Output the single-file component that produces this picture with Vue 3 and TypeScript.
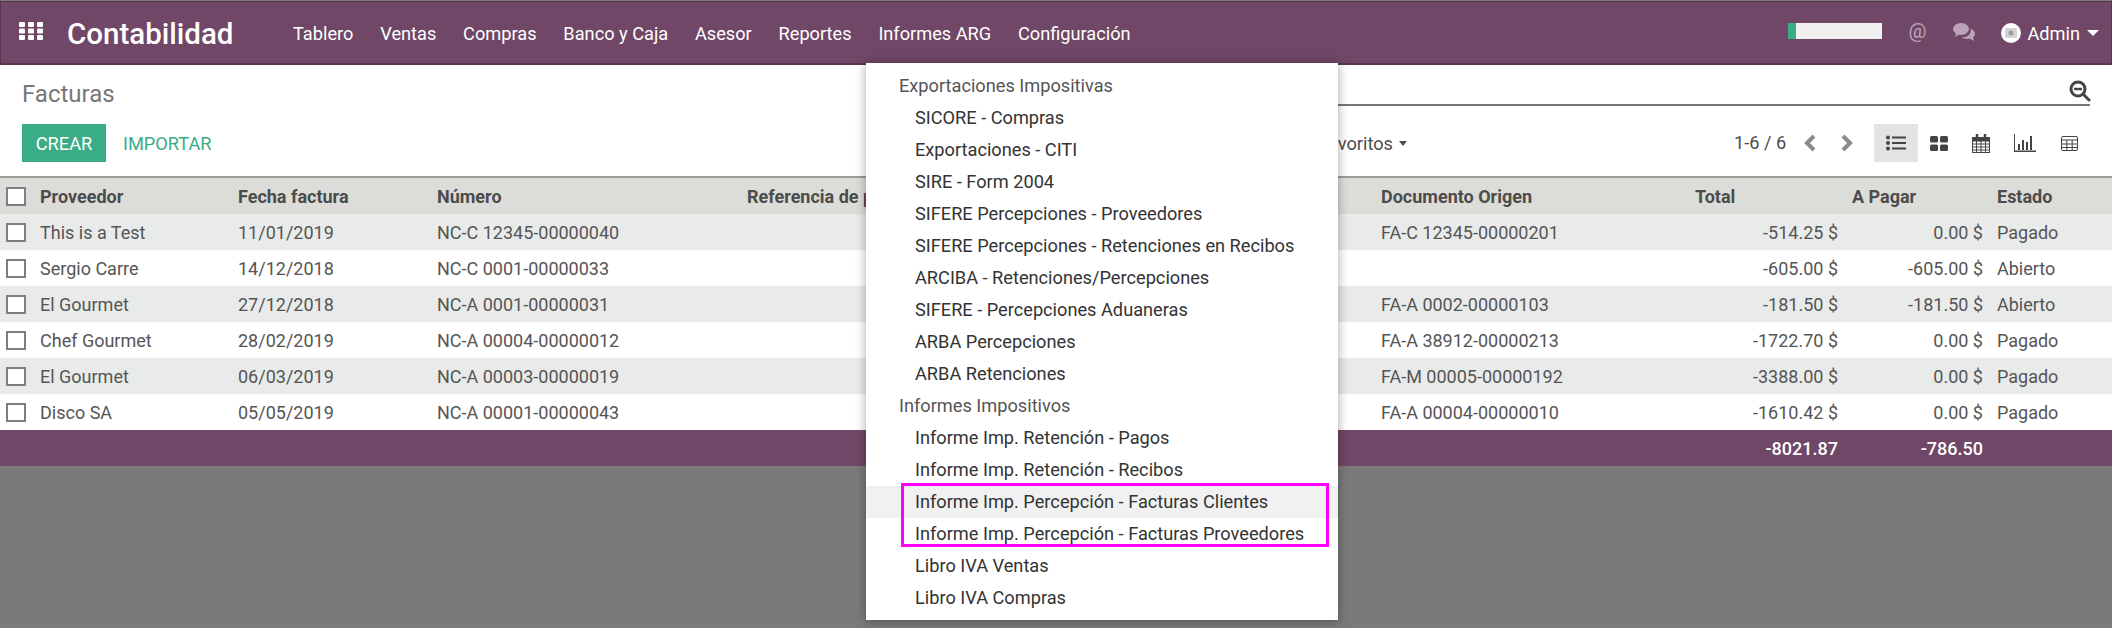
<script setup lang="ts">
interface Row { p: string; f: string; n: string; d: string; t: string; a: string; e: string }
const nav: string[] = ['Tablero', 'Ventas', 'Compras', 'Banco y Caja', 'Asesor', 'Reportes', 'Informes ARG', 'Configuración']
const rows: Row[] = [
  { p: 'This is a Test', f: '11/01/2019', n: 'NC-C 12345-00000040', d: 'FA-C 12345-00000201', t: '-514.25 $', a: '0.00 $', e: 'Pagado' },
  { p: 'Sergio Carre', f: '14/12/2018', n: 'NC-C 0001-00000033', d: '', t: '-605.00 $', a: '-605.00 $', e: 'Abierto' },
  { p: 'El Gourmet', f: '27/12/2018', n: 'NC-A 0001-00000031', d: 'FA-A 0002-00000103', t: '-181.50 $', a: '-181.50 $', e: 'Abierto' },
  { p: 'Chef Gourmet', f: '28/02/2019', n: 'NC-A 00004-00000012', d: 'FA-A 38912-00000213', t: '-1722.70 $', a: '0.00 $', e: 'Pagado' },
  { p: 'El Gourmet', f: '06/03/2019', n: 'NC-A 00003-00000019', d: 'FA-M 00005-00000192', t: '-3388.00 $', a: '0.00 $', e: 'Pagado' },
  { p: 'Disco SA', f: '05/05/2019', n: 'NC-A 00001-00000043', d: 'FA-A 00004-00000010', t: '-1610.42 $', a: '0.00 $', e: 'Pagado' }
]
const menuA: string[] = ['SICORE - Compras', 'Exportaciones - CITI', 'SIRE - Form 2004', 'SIFERE Percepciones - Proveedores', 'SIFERE Percepciones - Retenciones en Recibos', 'ARCIBA - Retenciones/Percepciones', 'SIFERE - Percepciones Aduaneras', 'ARBA Percepciones', 'ARBA Retenciones']
const menuB: string[] = ['Informe Imp. Retención - Pagos', 'Informe Imp. Retención - Recibos', 'Informe Imp. Percepción - Facturas Clientes', 'Informe Imp. Percepción - Facturas Proveedores', 'Libro IVA Ventas', 'Libro IVA Compras']
</script>

<template>
  <div class="page">
    <header class="navbar">
      <svg class="apps" width="24" height="18" viewBox="0 0 24 18" fill="#fff">
        <rect x="0" y="0" width="6" height="5" rx="1" /><rect x="9" y="0" width="6" height="5" rx="1" /><rect x="18" y="0" width="6" height="5" rx="1" />
        <rect x="0" y="6.5" width="6" height="5" rx="1" /><rect x="9" y="6.5" width="6" height="5" rx="1" /><rect x="18" y="6.5" width="6" height="5" rx="1" />
        <rect x="0" y="13" width="6" height="5" rx="1" /><rect x="9" y="13" width="6" height="5" rx="1" /><rect x="18" y="13" width="6" height="5" rx="1" />
      </svg>
      <span class="brand">Contabilidad</span>
      <nav class="menu"><a v-for="n in nav" :key="n">{{ n }}</a></nav>
      <div class="systray">
        <div class="progress"><i></i></div>
        <span class="at">@</span>
        <svg class="chat" width="22" height="20" viewBox="0 0 22 20" fill="#bda3b7">
          <ellipse cx="8" cy="7" rx="8" ry="6" />
          <path d="M3 11l-1 4 5-3z" />
          <path d="M17.5 6.5c2.6 1 4.5 3 4.5 5.2 0 1.5-.8 2.8-2 3.8l1 3.5-4.4-2.5c-1 .3-2 .4-3 .4-2 0-3.700-.6-5-1.600 5.500.2 10.500-3.100 8.900-9.300z" />
        </svg>
        <span class="avatar">
          <svg width="12" height="10" viewBox="0 0 12 10"><rect width="12" height="10" rx="1" fill="#d6d3d5" /><circle cx="6" cy="5" r="2.500" fill="#a09ca0" /></svg>
        </span>
        <span class="admin">Admin</span>
        <span class="caret"></span>
      </div>
    </header>

    <section class="panel">
      <div class="panel-top">
        <h1>Facturas</h1>
        <div class="search">
          <svg width="22" height="22" viewBox="0 0 22 22" fill="none" stroke="#444" stroke-width="3">
            <circle cx="9" cy="9" r="7" /><path d="M14 14l6 6" stroke-linecap="round" /><path d="M5 9h8" stroke-width="2.500" />
          </svg>
        </div>
      </div>
      <div class="panel-bottom">
        <button class="crear">CREAR</button>
        <button class="importar">IMPORTAR</button>
        <div class="filters"><span>Filtros</span><span>Agrupar por</span><span>Favoritos</span><i class="mini-caret"></i></div>
        <span class="pager">1-6 / 6</span>
        <svg class="chev" width="14" height="20" viewBox="0 0 14 20" fill="none" stroke="#8a8a8a" stroke-width="4"><path d="M11 3l-7 7 7 7" /></svg>
        <svg class="chev chev2" width="14" height="20" viewBox="0 0 14 20" fill="none" stroke="#8a8a8a" stroke-width="4"><path d="M3 3l7 7-7 7" /></svg>
        <div class="views">
          <span class="view on">
            <svg width="20" height="16" viewBox="0 0 20 16" fill="#444"><circle cx="2" cy="2.500" r="2" /><circle cx="2" cy="8" r="2" /><circle cx="2" cy="13.500" r="2" /><rect x="6" y="1.500" width="14" height="2" /><rect x="6" y="7" width="14" height="2" /><rect x="6" y="12.500" width="14" height="2" /></svg>
          </span>
          <span class="view w42">
            <svg width="18" height="15" viewBox="0 0 18 15" fill="#444"><rect width="8" height="6.500" rx="1.500" /><rect x="10" width="8" height="6.500" rx="1.500" /><rect y="8.500" width="8" height="6.500" rx="1.500" /><rect x="10" y="8.500" width="8" height="6.500" rx="1.500" /></svg>
          </span>
          <span class="view w42">
            <svg width="18" height="19" viewBox="0 0 18 19" fill="none" stroke="#444" stroke-width="1"><rect x=".5" y="3.500" width="17" height="15" /><rect x=".5" y="3.500" width="17" height="3.500" fill="#444" /><path d="M.5 10h17M.5 13h17M.5 16h17M4.500 7v11M9 7v11M13.500 7v11" /><path d="M5 0v5M13 0v5" stroke-width="2.500" /></svg>
          </span>
          <span class="view w46">
            <svg width="22" height="18" viewBox="0 0 22 18" fill="#444"><rect x="0" y="0" width="1" height="17" /><rect x="0" y="16.500" width="22" height="1.500" /><rect x="4" y="10" width="2" height="6" /><rect x="8" y="6" width="2" height="10" /><rect x="12" y="8" width="2" height="8" /><rect x="16" y="2" width="2" height="14" /></svg>
          </span>
          <span class="view w42">
            <svg width="17" height="15" viewBox="0 0 17 15" fill="none" stroke="#444" stroke-width="1"><rect x=".5" y=".5" width="16" height="14" rx="1.500" /><path d="M.5 4h16M.5 8h16M.5 11.500h16M5.800 4v10.500M11.200 4v10.500" /></svg>
          </span>
        </div>
      </div>
    </section>

    <table class="grid">
      <colgroup>
        <col style="width: 33px" /><col style="width: 198px" /><col style="width: 199px" /><col style="width: 310px" /><col style="width: 634px" /><col style="width: 314px" /><col style="width: 157px" /><col style="width: 145px" /><col />
      </colgroup>
      <thead>
        <tr>
          <th><span class="check"></span></th>
          <th>Proveedor</th><th>Fecha factura</th><th>Número</th><th>Referencia de proveedor</th><th>Documento Origen</th><th>Total</th><th>A Pagar</th><th>Estado</th>
        </tr>
      </thead>
      <tbody>
        <tr v-for="(r, i) in rows" :key="i">
          <td><span class="check"></span></td>
          <td>{{ r.p }}</td><td>{{ r.f }}</td><td>{{ r.n }}</td><td></td><td>{{ r.d }}</td>
          <td class="num">{{ r.t }}</td><td class="num">{{ r.a }}</td><td>{{ r.e }}</td>
        </tr>
      </tbody>
      <tfoot>
        <tr><td colspan="6"></td><td class="num">-8021.87</td><td class="num">-786.50</td><td></td></tr>
      </tfoot>
    </table>

    <div class="backdrop"></div>

    <div class="dropdown">
      <div class="head">Exportaciones Impositivas</div>
      <div v-for="m in menuA" :key="m" class="item">{{ m }}</div>
      <div class="head">Informes Impositivos</div>
      <div v-for="(m, i) in menuB" :key="m" class="item" :class="{ hover: i === 2 }">{{ m }}</div>
      <div class="mark"></div>
    </div>
  </div>
</template>

<style>
html, body { margin: 0; background: #7a7a7a; }
</style>

<style scoped>
.page { position: relative; width: 2112px; height: 628px; overflow: hidden; display: flex; flex-direction: column; font-family: Roboto, "Noto Sans", sans-serif; font-size: 18.2px; color: #4c4c4c; background: #7a7a7a; }
.navbar { height: 64px; box-sizing: border-box; margin-top: 1px; flex: none; display: flex; align-items: center; background: #704766; border: 1px solid #573650; border-width: 1px 1px 2px 1px; color: #fff; padding-left: 18px; }
.apps { margin-top: -3px; }
.brand { font-size: 29.500px; font-weight: 500; margin-left: 24px; width: 226px; padding-top: 2px; }
.menu { display: flex; padding-top: 2px; }
.menu a { margin-right: 26.800px; }
.systray { margin-left: auto; display: flex; align-items: center; height: 100%; padding-right: 12px; }
.progress { width: 94px; height: 16px; background: #f0f0f0; margin-top: -3px; }
.progress i { display: block; width: 8px; height: 16px; background: #3aad87; }
.at { margin-left: 26px; color: #bda3b7; font-size: 20px; margin-top: -3px; }
.chat { margin-left: 27px; margin-top: -1px; }
.avatar { margin-left: 26px; width: 20px; height: 20px; border-radius: 50%; background: #fff; display: flex; align-items: center; justify-content: center; }
.admin { margin-left: 6px; margin-right: 7px; padding-top: 2px; }
.caret { width: 0; height: 0; border: 6px solid transparent; border-top-color: #fff; border-bottom: 0; }

.panel { flex: none; background: #fff; height: 113px; box-sizing: border-box; border-bottom: 2px solid #9b9b9b; }
.panel-top { height: 41px; margin: 0 22px; display: flex; justify-content: space-between; }
h1 { margin: 0; padding-top: 15px; font-size: 24px; font-weight: 400; color: #777; line-height: 28px; }
.search { width: 752px; height: 41px; box-sizing: border-box; border-bottom: 2px solid #777; display: flex; justify-content: flex-end; align-items: flex-start; padding-top: 15px; }
.search svg { margin-right: -1px; }
.panel-bottom { display: flex; align-items: center; height: 38px; margin-top: 18px; padding-left: 22px; }
button { border: 0; font: inherit; height: 38px; padding: 0; background: none; }
.crear { width: 84px; background: #3aad87; color: #fff; }
.importar { margin-left: 17px; color: #3aad87; }
.filters { position: absolute; left: 1167px; display: flex; align-items: center; gap: 30px; color: #4c4c4c; width: 240px; justify-content: flex-end; }
.mini-caret { width: 0; height: 0; border: 4px solid transparent; border-top: 5px solid #4c4c4c; border-bottom: 0; margin-left: -24px; }
.pager { position: absolute; left: 1734px; margin-top: -2px; }
.chev { position: absolute; left: 1803px; }
.chev2 { left: 1840px; }
.views { position: absolute; left: 1874px; display: flex; }
.view { width: 44px; height: 38px; display: flex; align-items: center; justify-content: center; }
.view.w42 { width: 42px; }
.view.w46 { width: 46px; }
.view.on { background: #e3e3e3; }

.grid { flex: none; width: 2112px; border-collapse: collapse; table-layout: fixed; font-size: 18px; }
.grid th, .grid td { height: 36px; padding: 0 7px; text-align: left; white-space: nowrap; box-sizing: border-box; overflow: hidden; }
.grid th { background: #dcddd8; font-weight: 700; color: #4c4c4c; }
.grid tbody td { color: #555; background: #fff; }
.grid tbody tr:nth-child(odd) td { background: #e9ebea; }
.grid tfoot td { background: #704766; color: #fff; font-weight: 500; }
.grid .num { text-align: right; }
.check { display: block; width: 20px; height: 19px; box-sizing: border-box; border: 2px solid #7f7f7f; background: #fff; margin-left: -1px; }
.backdrop { flex: 1; background: #7a7a7a; }

.dropdown { position: absolute; left: 866px; top: 63px; width: 472px; height: 557px; box-sizing: border-box; padding-top: 7px; background: #fff; box-shadow: 0 1px 10px rgba(0, 0, 0, .35); color: #333; }
.head { height: 32px; line-height: 32px; padding-left: 33px; color: #555; }
.item { height: 32px; line-height: 32px; padding-left: 49px; }
.item.hover { background: #f1f1f1; }
.mark { position: absolute; left: 35px; top: 420px; width: 428px; height: 64px; box-sizing: border-box; border: 3px solid #f0f; }
</style>
